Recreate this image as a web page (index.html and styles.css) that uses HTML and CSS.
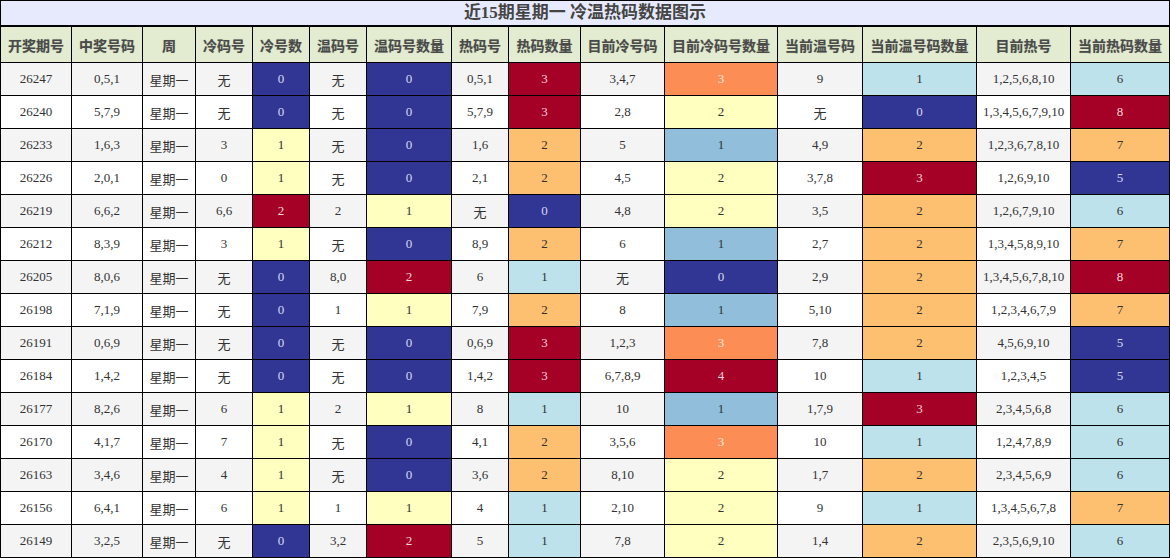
FILE: index.html
```html
<!DOCTYPE html>
<html lang="zh-CN">
<head>
<meta charset="utf-8">
<title>近15期星期一 冷温热码数据图示</title>
<link rel="stylesheet" href="styles.css">
</head>
<body>
<div class="title">近15期星期一 冷温热码数据图示</div>
<div class="grid">
  <div class="h">开奖期号</div><div class="h">中奖号码</div><div class="h">周</div><div class="h">冷码号</div><div class="h">冷号数</div><div class="h">温码号</div><div class="h">温码号数量</div><div class="h">热码号</div><div class="h">热码数量</div><div class="h">目前冷号码</div><div class="h">目前冷码号数量</div><div class="h">当前温号码</div><div class="h">当前温号码数量</div><div class="h">目前热号</div><div class="h">当前热码数量</div>

  <div class="g">26247</div><div class="g">0,5,1</div><div class="g">星期一</div><div class="g">无</div><div class="db">0</div><div class="g">无</div><div class="db">0</div><div class="g">0,5,1</div><div class="dr">3</div><div class="g">3,4,7</div><div class="or">3</div><div class="g">9</div><div class="lb">1</div><div class="g">1,2,5,6,8,10</div><div class="lb">6</div>

  <div class="w">26240</div><div class="w">5,7,9</div><div class="w">星期一</div><div class="w">无</div><div class="db">0</div><div class="w">无</div><div class="db">0</div><div class="w">5,7,9</div><div class="dr">3</div><div class="w">2,8</div><div class="ly">2</div><div class="w">无</div><div class="db">0</div><div class="w">1,3,4,5,6,7,9,10</div><div class="dr">8</div>

  <div class="g">26233</div><div class="g">1,6,3</div><div class="g">星期一</div><div class="g">3</div><div class="ly">1</div><div class="g">无</div><div class="db">0</div><div class="g">1,6</div><div class="lo">2</div><div class="g">5</div><div class="mb">1</div><div class="g">4,9</div><div class="lo">2</div><div class="g">1,2,3,6,7,8,10</div><div class="lo">7</div>

  <div class="w">26226</div><div class="w">2,0,1</div><div class="w">星期一</div><div class="w">0</div><div class="ly">1</div><div class="w">无</div><div class="db">0</div><div class="w">2,1</div><div class="lo">2</div><div class="w">4,5</div><div class="ly">2</div><div class="w">3,7,8</div><div class="dr">3</div><div class="w">1,2,6,9,10</div><div class="db">5</div>

  <div class="g">26219</div><div class="g">6,6,2</div><div class="g">星期一</div><div class="g">6,6</div><div class="dr">2</div><div class="g">2</div><div class="ly">1</div><div class="g">无</div><div class="db">0</div><div class="g">4,8</div><div class="ly">2</div><div class="g">3,5</div><div class="lo">2</div><div class="g">1,2,6,7,9,10</div><div class="lb">6</div>

  <div class="w">26212</div><div class="w">8,3,9</div><div class="w">星期一</div><div class="w">3</div><div class="ly">1</div><div class="w">无</div><div class="db">0</div><div class="w">8,9</div><div class="lo">2</div><div class="w">6</div><div class="mb">1</div><div class="w">2,7</div><div class="lo">2</div><div class="w">1,3,4,5,8,9,10</div><div class="lo">7</div>

  <div class="g">26205</div><div class="g">8,0,6</div><div class="g">星期一</div><div class="g">无</div><div class="db">0</div><div class="g">8,0</div><div class="dr">2</div><div class="g">6</div><div class="lb">1</div><div class="g">无</div><div class="db">0</div><div class="g">2,9</div><div class="lo">2</div><div class="g">1,3,4,5,6,7,8,10</div><div class="dr">8</div>

  <div class="w">26198</div><div class="w">7,1,9</div><div class="w">星期一</div><div class="w">无</div><div class="db">0</div><div class="w">1</div><div class="ly">1</div><div class="w">7,9</div><div class="lo">2</div><div class="w">8</div><div class="mb">1</div><div class="w">5,10</div><div class="lo">2</div><div class="w">1,2,3,4,6,7,9</div><div class="lo">7</div>

  <div class="g">26191</div><div class="g">0,6,9</div><div class="g">星期一</div><div class="g">无</div><div class="db">0</div><div class="g">无</div><div class="db">0</div><div class="g">0,6,9</div><div class="dr">3</div><div class="g">1,2,3</div><div class="or">3</div><div class="g">7,8</div><div class="lo">2</div><div class="g">4,5,6,9,10</div><div class="db">5</div>

  <div class="w">26184</div><div class="w">1,4,2</div><div class="w">星期一</div><div class="w">无</div><div class="db">0</div><div class="w">无</div><div class="db">0</div><div class="w">1,4,2</div><div class="dr">3</div><div class="w">6,7,8,9</div><div class="dr">4</div><div class="w">10</div><div class="lb">1</div><div class="w">1,2,3,4,5</div><div class="db">5</div>

  <div class="g">26177</div><div class="g">8,2,6</div><div class="g">星期一</div><div class="g">6</div><div class="ly">1</div><div class="g">2</div><div class="ly">1</div><div class="g">8</div><div class="lb">1</div><div class="g">10</div><div class="mb">1</div><div class="g">1,7,9</div><div class="dr">3</div><div class="g">2,3,4,5,6,8</div><div class="lb">6</div>

  <div class="w">26170</div><div class="w">4,1,7</div><div class="w">星期一</div><div class="w">7</div><div class="ly">1</div><div class="w">无</div><div class="db">0</div><div class="w">4,1</div><div class="lo">2</div><div class="w">3,5,6</div><div class="or">3</div><div class="w">10</div><div class="lb">1</div><div class="w">1,2,4,7,8,9</div><div class="lb">6</div>

  <div class="g">26163</div><div class="g">3,4,6</div><div class="g">星期一</div><div class="g">4</div><div class="ly">1</div><div class="g">无</div><div class="db">0</div><div class="g">3,6</div><div class="lo">2</div><div class="g">8,10</div><div class="ly">2</div><div class="g">1,7</div><div class="lo">2</div><div class="g">2,3,4,5,6,9</div><div class="lb">6</div>

  <div class="w">26156</div><div class="w">6,4,1</div><div class="w">星期一</div><div class="w">6</div><div class="ly">1</div><div class="w">1</div><div class="ly">1</div><div class="w">4</div><div class="lb">1</div><div class="w">2,10</div><div class="ly">2</div><div class="w">9</div><div class="lb">1</div><div class="w">1,3,4,5,6,7,8</div><div class="lo">7</div>

  <div class="g">26149</div><div class="g">3,2,5</div><div class="g">星期一</div><div class="g">无</div><div class="db">0</div><div class="g">3,2</div><div class="dr">2</div><div class="g">5</div><div class="lb">1</div><div class="g">7,8</div><div class="ly">2</div><div class="g">1,4</div><div class="lo">2</div><div class="g">2,3,5,6,9,10</div><div class="lb">6</div>
</div>
</body>
</html>
```

FILE: styles.css
```css
html, body {
  margin: 0;
  padding: 0;
  background: #ffffff;
}

body {
  width: 1170px;
  font-family: "Liberation Serif", "Noto Sans CJK SC", serif;
  font-size: 13px;
  color: #333333;
}

.title {
  box-sizing: border-box;
  height: 26px;
  border: 1px solid #000000;
  background: #e7eafc;
  color: #444444;
  font-size: 17px;
  font-weight: bold;
  line-height: 24px;
  text-align: center;
}

.grid {
  display: grid;
  grid-template-columns: 70px 70px 52px 56px 56px 56px 84px 56px 71px 83px 112px 84px 113px 93px 98px;
  grid-template-rows: 35px repeat(15, 32px);
  gap: 1px;
  padding: 1px;
  background: #000000;
  width: 1170px;
  box-sizing: border-box;
}

.grid > div {
  display: flex;
  align-items: center;
  justify-content: center;
  white-space: nowrap;
}

.h {
  background: #e3ecd0;
  color: #4a4a4a;
  font-size: 14px;
  font-weight: bold;
  text-shadow: 0 0 1px rgba(0, 0, 0, 0.25);
}

.g { background: #f4f4f4; color: #333333; }
.w { background: #ffffff; color: #333333; }

.db { background: #313695; color: #d8d9ee; }
.dr { background: #a50026; color: #f0d8dc; }
.or { background: #fb8d55; color: #fbe8dc; }
.lo { background: #fdbf70; color: #333333; }
.ly { background: #ffffbf; color: #333333; }
.lb { background: #bee2ec; color: #333333; }
.mb { background: #91bfdb; color: #333333; }
```
